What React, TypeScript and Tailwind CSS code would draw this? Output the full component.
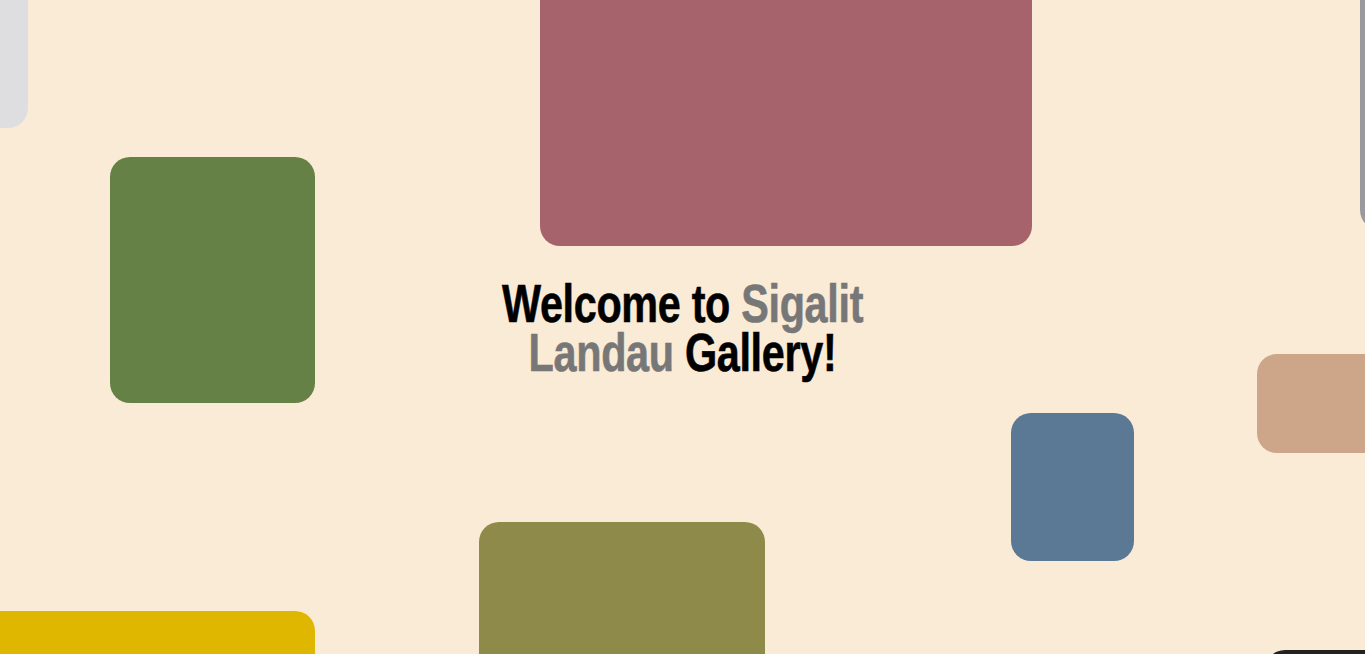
const shapes = [
  { id: 'gray-left', cls: 'left-[-180px] top-[-120px] w-[208px] h-[248px] bg-[#dedee0]' },
  { id: 'green', cls: 'left-[110px] top-[157px] w-[205px] h-[246px] bg-[#668145]' },
  { id: 'rose', cls: 'left-[540px] top-[-60px] w-[492px] h-[306px] bg-[#a6636b]' },
  { id: 'gray-right', cls: 'left-[1360px] top-[-40px] w-[160px] h-[270px] bg-[#9a9a9e]' },
  { id: 'tan', cls: 'left-[1257px] top-[354px] w-[180px] h-[99px] bg-[#cda588]' },
  { id: 'blue', cls: 'left-[1011px] top-[413px] w-[123px] h-[148px] bg-[#5b7895]' },
  { id: 'olive', cls: 'left-[479px] top-[522px] w-[286px] h-[200px] bg-[#8e8b4a]' },
  { id: 'yellow', cls: 'left-[-100px] top-[611px] w-[415px] h-[160px] bg-[#dfb700]' },
  { id: 'dark', cls: 'left-[1265px] top-[650px] w-[200px] h-[160px] bg-[#222222]' },
];

const App = () => {
  return (
    <div className="relative h-screen w-full overflow-hidden bg-[#faebd7]">
      {/* floating gallery tiles */}
      {shapes.map((s) => (
        <div key={s.id} className={`absolute rounded-[20px] ${s.cls}`} />
      ))}

      <div className="relative flex h-full items-center justify-center pt-[2px]">
        <h1 className="scale-x-[0.78] whitespace-nowrap text-center font-['Liberation_Sans',Arial,sans-serif] text-[53px] font-bold leading-[49px] tracking-[-0.4px] text-black [-webkit-text-stroke:0.6px]">
          Welcome to <span className="text-[#777777]">Sigalit</span>
          <br />
          <span className="text-[#777777]">Landau</span> Gallery!
        </h1>
      </div>
    </div>
  );
};

export default App;
